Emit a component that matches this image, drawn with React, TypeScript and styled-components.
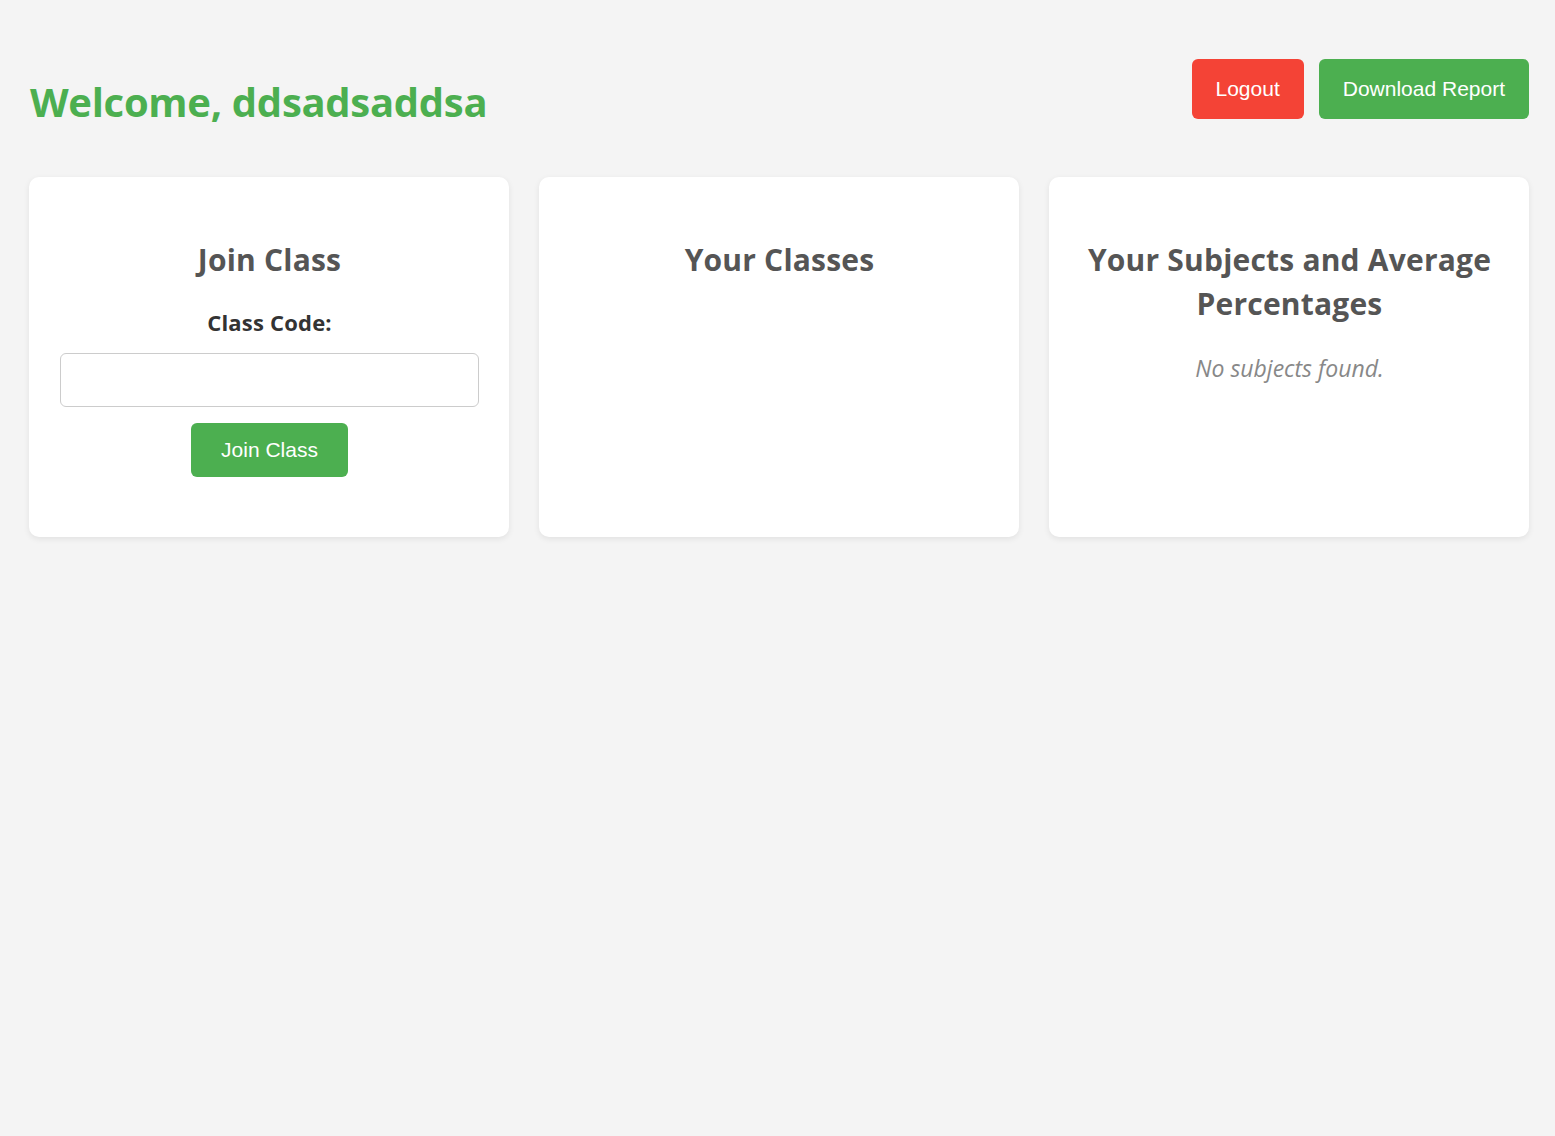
import React from "react";
import styled, { createGlobalStyle } from "styled-components";

const GlobalStyle = createGlobalStyle`
  html, body {
    margin: 0;
    padding: 0;
    background: #f4f4f4;
    font-family: "Open Sans", "Noto Sans", sans-serif;
  }
  * { box-sizing: border-box; }
`;

const Page = styled.div`
  min-height: 1136px;
  padding: 0 26px 30px 29px;
`;

const Header = styled.header`
  display: flex;
  justify-content: space-between;
  align-items: flex-start;
`;

const Title = styled.h1`
  margin: 78px 0 0 1px;
  font-size: 40px;
  line-height: 48px;
  font-weight: 700;
  color: #4caf50;
  letter-spacing: -0.3px;
`;

const Actions = styled.div`
  display: flex;
  gap: 15px;
  margin-top: 59px;
`;

const Button = styled.button<{ $variant?: "danger" | "primary" }>`
  height: ${(p) => (p.$variant ? "60px" : "54px")};
  padding: 0 ${(p) => (p.$variant ? "24px" : "30px")};
  border: none;
  border-radius: 6px;
  background: ${(p) => (p.$variant === "danger" ? "#f44336" : "#4caf50")};
  color: #fff;
  font-family: "Liberation Sans", Arial, sans-serif;
  font-size: 21px;
  cursor: pointer;
`;

const Grid = styled.main`
  display: grid;
  grid-template-columns: repeat(3, 480px);
  gap: 30px;
  margin-top: 51px;
`;

const Card = styled.section`
  height: 360px;
  padding: 30px 30px 30px 31px;
  background: #fff;
  border-radius: 10px;
  box-shadow: 0 2px 6px rgba(0, 0, 0, 0.08);
  display: flex;
  flex-direction: column;
  align-items: center;
  text-align: center;
`;

const CardTitle = styled.h2`
  margin: 31px 0 0;
  font-size: 30px;
  line-height: 44px;
  font-weight: 700;
  color: #555;
  letter-spacing: 0.2px;
`;

const Label = styled.label`
  margin-top: 25px;
  font-size: 22px;
  line-height: 30px;
  font-weight: 700;
  color: #333;
  letter-spacing: 0.2px;
`;

const Input = styled.input`
  margin-top: 16px;
  width: 100%;
  height: 54px;
  border: 1px solid #ccc;
  border-radius: 6px;
  background: #fff;
  font-size: 20px;
  padding: 0 12px;
`;

const JoinButton = styled(Button)`
  margin-top: 16px;
`;

const Empty = styled.p`
  margin: 27px 0 0;
  font-size: 23px;
  line-height: 30px;
  font-style: italic;
  color: #888;
`;

export default function App() {
  return (
    <>
      <GlobalStyle />
      <Page>
        <Header>
          <Title>Welcome, ddsadsaddsa</Title>
          <Actions>
            <Button $variant="danger">Logout</Button>
            <Button $variant="primary">Download Report</Button>
          </Actions>
        </Header>
        <Grid>
          <Card>
            <CardTitle>Join Class</CardTitle>
            <Label htmlFor="code">Class Code:</Label>
            <Input id="code" type="text" />
            <JoinButton>Join Class</JoinButton>
          </Card>
          <Card>
            <CardTitle>Your Classes</CardTitle>
          </Card>
          <Card>
            <CardTitle>Your Subjects and Average Percentages</CardTitle>
            <Empty>No subjects found.</Empty>
          </Card>
        </Grid>
      </Page>
    </>
  );
}
